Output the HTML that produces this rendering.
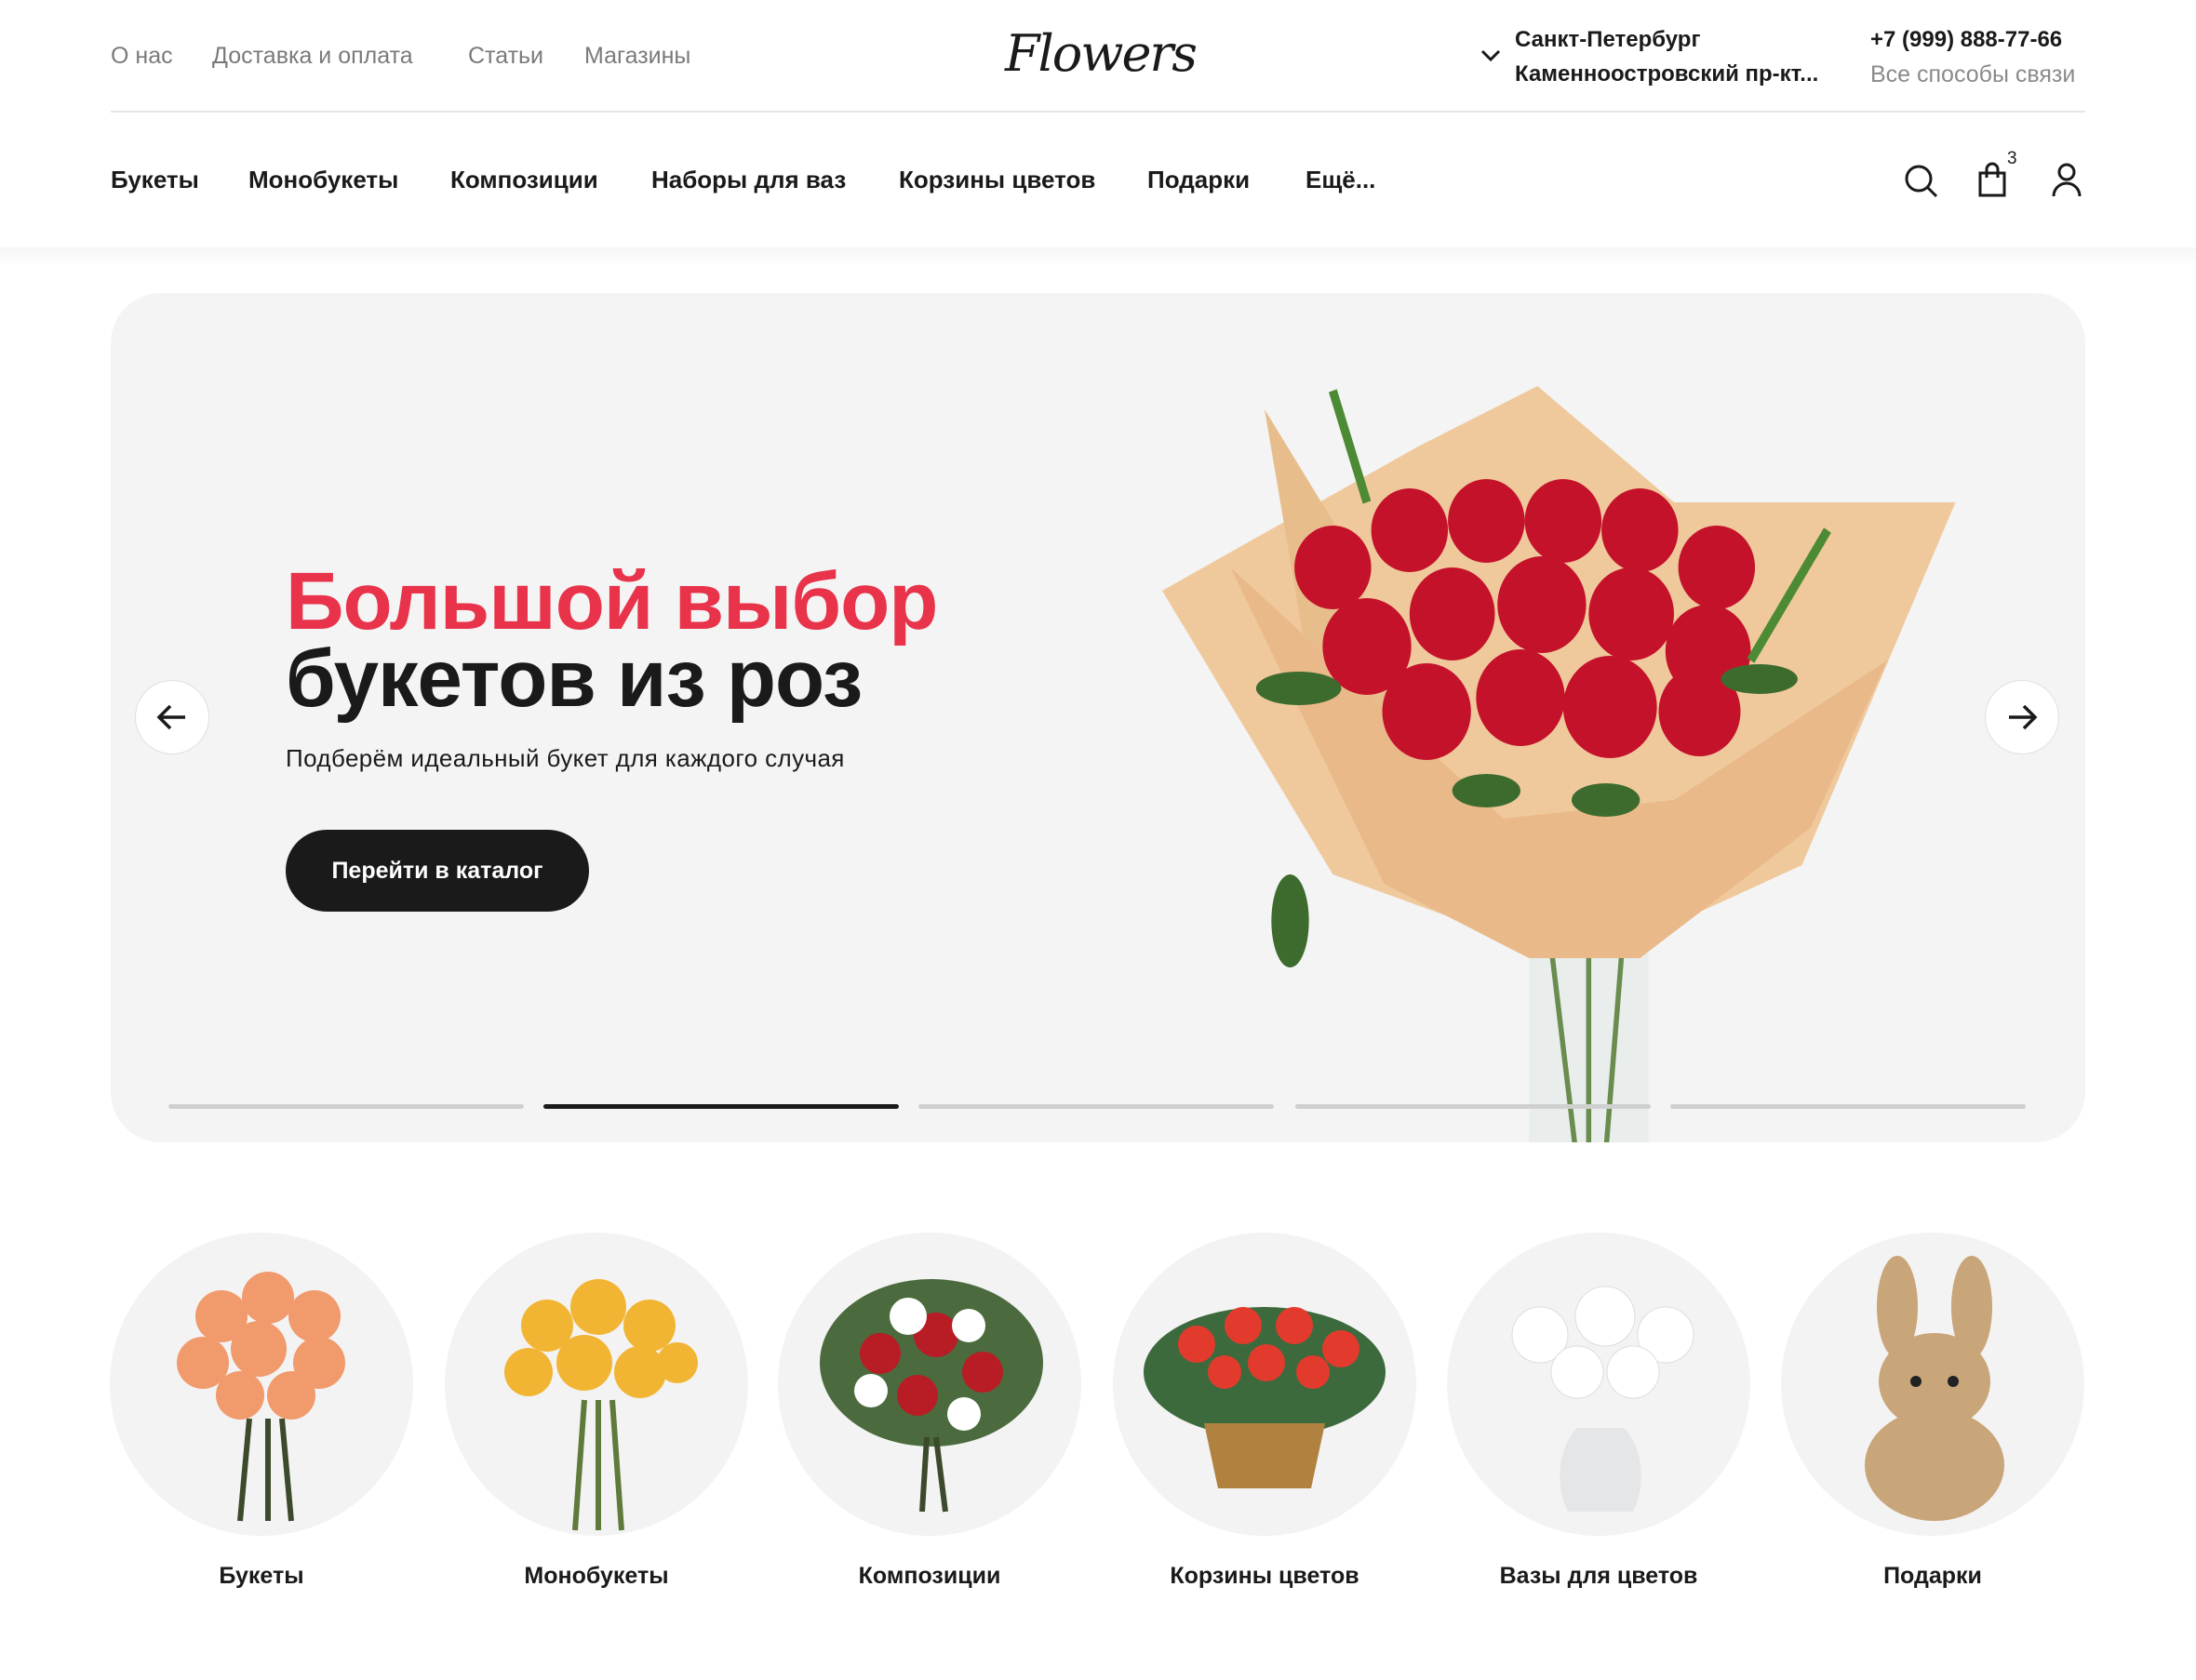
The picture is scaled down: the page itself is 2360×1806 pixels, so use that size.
<!DOCTYPE html>
<html><head><meta charset="utf-8"><style>
*{margin:0;padding:0;box-sizing:border-box}
body{width:2360px;height:1806px;background:#fff;font-family:"Liberation Sans","DejaVu Sans",sans-serif;color:#1a1a1a;position:relative;overflow:hidden}
.a{position:absolute;white-space:nowrap}
.top{font-size:25px;color:#7a7a7a;top:46px}
.nav{font-size:26px;font-weight:bold;top:178px;color:#1a1a1a}
.cat{font-size:25px;font-weight:bold;top:1680px;text-align:center;width:360px}
.circ{position:absolute;width:326px;height:326px;border-radius:50%;background:#f3f3f3;top:1325px;overflow:hidden}
.bar{position:absolute;top:1187px;height:5px;width:382px;background:#cfcfcf;border-radius:3px}
</style></head><body>
<div class="a top" style="left:119px">О нас</div>
<div class="a top" style="left:228px">Доставка и оплата</div>
<div class="a top" style="left:503px">Статьи</div>
<div class="a top" style="left:628px">Магазины</div>
<div class="a" style="left:1080px;top:26px;font-family:'DejaVu Serif','Liberation Serif',serif;font-style:italic;font-size:54px;letter-spacing:-2px">Flowers</div>
<svg class="a" style="left:1590px;top:52px" width="24" height="16"><path d="M3 3l9 9 9-9" fill="none" stroke="#1a1a1a" stroke-width="3"/></svg>
<div class="a" style="left:1628px;top:29px;font-size:24px;font-weight:bold">Санкт-Петербург</div>
<div class="a" style="left:1628px;top:66px;font-size:24px;font-weight:bold">Каменноостровский пр-кт...</div>
<div class="a" style="left:2010px;top:29px;font-size:24px;font-weight:bold">+7 (999) 888-77-66</div>
<div class="a" style="left:2010px;top:66px;font-size:25px;color:#8a8a8a">Все способы связи</div>
<div class="a" style="left:119px;top:119px;width:2122px;height:2px;background:#e6e6e6"></div>
<div class="a nav" style="left:119px">Букеты</div>
<div class="a nav" style="left:267px">Монобукеты</div>
<div class="a nav" style="left:484px">Композиции</div>
<div class="a nav" style="left:700px">Наборы для ваз</div>
<div class="a nav" style="left:966px">Корзины цветов</div>
<div class="a nav" style="left:1233px">Подарки</div>
<div class="a nav" style="left:1403px">Ещё...</div>
<svg class="a" style="left:2045px;top:175px" width="40" height="40"><circle cx="17" cy="17" r="13" fill="none" stroke="#1a1a1a" stroke-width="3"/><path d="M27 27l9 9" stroke="#1a1a1a" stroke-width="3"/></svg>
<svg class="a" style="left:2124px;top:174px" width="34" height="38"><path d="M4 12h26v24H4z" fill="none" stroke="#1a1a1a" stroke-width="3"/><path d="M11 17V8a6 6 0 0 1 12 0v9" fill="none" stroke="#1a1a1a" stroke-width="3"/></svg>
<div class="a" style="left:2157px;top:160px;font-size:19px">3</div>
<svg class="a" style="left:2204px;top:174px" width="34" height="40"><circle cx="17" cy="11" r="8" fill="none" stroke="#1a1a1a" stroke-width="3"/><path d="M3 37a14 14 0 0 1 28 0" fill="none" stroke="#1a1a1a" stroke-width="3"/></svg>
<div class="a" style="left:0;top:266px;width:2360px;height:20px;background:linear-gradient(#f6f6f6,#fff)"></div>
<div class="a" style="left:119px;top:315px;width:2122px;height:913px;background:#f4f4f4;border-radius:54px;overflow:hidden">
<svg style="position:absolute;left:1130px;top:95px" width="880" height="820" viewBox="0 0 960 820" preserveAspectRatio="none">
<path d="M0 225L300 70 440 5 600 130 930 130 750 520 560 600 410 600 200 530Z" fill="#efc99c"/>
<path d="M120 30L170 300 300 440 220 180Z" fill="#e8bd8c"/>
<path d="M430 600h140v230H430z" fill="#e8ecea" opacity=".9"/>
<path d="M455 600l30 230M540 600l-20 230M500 600v230" stroke="#6a8c4f" stroke-width="6"/>
<path d="M80 200L260 540 430 620 560 620 760 480 850 300 600 450 400 470Z" fill="#e9b98a"/>
<g fill="#c5122b">
<circle cx="200" cy="200" r="45"/><circle cx="290" cy="160" r="45"/><circle cx="380" cy="150" r="45"/><circle cx="470" cy="150" r="45"/><circle cx="560" cy="160" r="45"/><circle cx="650" cy="200" r="45"/>
<circle cx="240" cy="285" r="52"/><circle cx="340" cy="250" r="50"/><circle cx="445" cy="240" r="52"/><circle cx="550" cy="250" r="50"/><circle cx="640" cy="290" r="50"/>
<circle cx="310" cy="355" r="52"/><circle cx="420" cy="340" r="52"/><circle cx="525" cy="350" r="55"/><circle cx="630" cy="355" r="48"/>
</g>
<g fill="#3d6b2e"><ellipse cx="160" cy="330" rx="50" ry="18"/><ellipse cx="700" cy="320" rx="45" ry="16"/><ellipse cx="380" cy="440" rx="40" ry="18"/><ellipse cx="520" cy="450" rx="40" ry="18"/><ellipse cx="150" cy="580" rx="22" ry="50"/><path d="M200 10l40 120M780 160l-90 140" stroke="#4d8a34" stroke-width="10"/></g>
</svg>
</div>
<div class="a" style="left:307px;top:597px;font-size:87px;font-weight:bold;color:#e8334a;letter-spacing:-1px">Большой выбор</div>
<div class="a" style="left:307px;top:680px;font-size:87px;font-weight:bold;color:#1a1a1a;letter-spacing:-1px">букетов из роз</div>
<div class="a" style="left:307px;top:800px;font-size:26px;letter-spacing:0.4px">Подберём идеальный букет для каждого случая</div>
<div class="a" style="left:307px;top:892px;width:326px;height:88px;border-radius:44px;background:#1a1a1a;color:#fff;font-size:25px;font-weight:bold;text-align:center;line-height:88px">Перейти в каталог</div>
<div class="a" style="left:145px;top:731px;width:80px;height:80px;border-radius:50%;background:#fff;border:1px solid #e0e0e0"></div>
<svg class="a" style="left:167px;top:753px" width="36" height="36"><path d="M32 18H5M16 6L4 18l12 12" fill="none" stroke="#1a1a1a" stroke-width="3.5"/></svg>
<div class="a" style="left:2133px;top:731px;width:80px;height:80px;border-radius:50%;background:#fff;border:1px solid #e0e0e0"></div>
<svg class="a" style="left:2155px;top:753px" width="36" height="36"><path d="M4 18h27M20 6l12 12-12 12" fill="none" stroke="#1a1a1a" stroke-width="3.5"/></svg>
<div class="bar" style="left:181px"></div><div class="bar" style="left:584px;background:#1a1a1a"></div><div class="bar" style="left:987px"></div><div class="bar" style="left:1392px"></div><div class="bar" style="left:1795px"></div>

<div class="circ" style="left:118px"><svg width="326" height="326"><g fill="#f19a6c"><circle cx="120" cy="90" r="28"/><circle cx="170" cy="70" r="28"/><circle cx="220" cy="90" r="28"/><circle cx="100" cy="140" r="28"/><circle cx="160" cy="125" r="30"/><circle cx="225" cy="140" r="28"/><circle cx="140" cy="175" r="26"/><circle cx="195" cy="175" r="26"/></g><path d="M150 200l-10 110M170 200v110M185 200l10 110" stroke="#3b4a2a" stroke-width="6"/></svg></div>
<div class="circ" style="left:478px"><svg width="326" height="326"><g fill="#f2b533"><circle cx="110" cy="100" r="28"/><circle cx="165" cy="80" r="30"/><circle cx="220" cy="100" r="28"/><circle cx="90" cy="150" r="26"/><circle cx="150" cy="140" r="30"/><circle cx="210" cy="150" r="28"/><circle cx="250" cy="140" r="22"/></g><path d="M150 180l-10 140M165 180v140M180 180l10 140" stroke="#5f7a3b" stroke-width="6"/></svg></div>
<div class="circ" style="left:836px"><svg width="326" height="326"><ellipse cx="165" cy="140" rx="120" ry="90" fill="#4b6b3e"/><g fill="#b81c25"><circle cx="110" cy="130" r="22"/><circle cx="170" cy="110" r="24"/><circle cx="220" cy="150" r="22"/><circle cx="150" cy="175" r="22"/></g><g fill="#fff"><circle cx="140" cy="90" r="20"/><circle cx="205" cy="100" r="18"/><circle cx="100" cy="170" r="18"/><circle cx="200" cy="195" r="18"/></g><path d="M160 220l-5 80M170 220l10 80" stroke="#3b4a2a" stroke-width="6"/></svg></div>
<div class="circ" style="left:1196px"><svg width="326" height="326"><ellipse cx="163" cy="150" rx="130" ry="70" fill="#3c6a3c"/><g fill="#e23b2e"><circle cx="90" cy="120" r="20"/><circle cx="140" cy="100" r="20"/><circle cx="195" cy="100" r="20"/><circle cx="245" cy="125" r="20"/><circle cx="120" cy="150" r="18"/><circle cx="215" cy="150" r="18"/><circle cx="165" cy="140" r="20"/></g><path d="M98 205h130l-15 70h-100z" fill="#b0813f"/></svg></div>
<div class="circ" style="left:1555px"><svg width="326" height="326"><g fill="#fff" stroke="#ddd"><circle cx="100" cy="110" r="30"/><circle cx="170" cy="90" r="32"/><circle cx="235" cy="110" r="30"/><circle cx="140" cy="150" r="28"/><circle cx="200" cy="150" r="28"/></g><path d="M140 210h50c20 20 25 60 10 90h-70c-15-30-10-70 10-90z" fill="#e4e6e8"/></svg></div>
<div class="circ" style="left:1914px"><svg width="326" height="326"><g fill="#c9a57a"><ellipse cx="125" cy="80" rx="22" ry="55"/><ellipse cx="205" cy="80" rx="22" ry="55"/><ellipse cx="165" cy="160" rx="60" ry="52"/><ellipse cx="165" cy="250" rx="75" ry="60"/></g><circle cx="145" cy="160" r="6" fill="#222"/><circle cx="185" cy="160" r="6" fill="#222"/></svg></div>
<div class="a cat" style="left:101px">Букеты</div>
<div class="a cat" style="left:461px">Монобукеты</div>
<div class="a cat" style="left:819px">Композиции</div>
<div class="a cat" style="left:1179px">Корзины цветов</div>
<div class="a cat" style="left:1538px">Вазы для цветов</div>
<div class="a cat" style="left:1897px">Подарки</div>
</body></html>
